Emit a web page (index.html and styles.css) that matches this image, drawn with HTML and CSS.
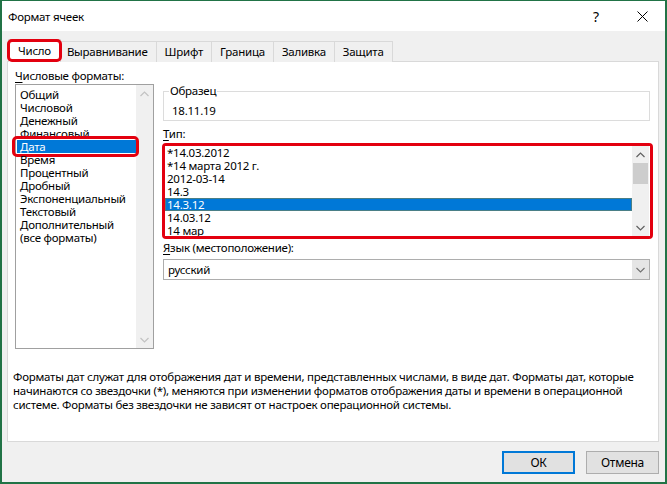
FILE: index.html
```html
<!DOCTYPE html>
<html lang="ru">
<head>
<meta charset="utf-8">
<title>Формат ячеек</title>
<link rel="stylesheet" href="styles.css">
</head>
<body>
<div class="window">
  <div class="titlebar">
    <span class="title">Формат ячеек</span>
    <span class="tbtn help">?</span>
    <span class="tbtn close">
      <svg width="11" height="11" viewBox="0 0 11 11"><path d="M0.5 0.5 L10.5 10.5 M10.5 0.5 L0.5 10.5" stroke="#000" stroke-width="1" fill="none"/></svg>
    </span>
  </div>
  <div class="content">
    <div class="tabs">
      <div class="tab active">Число</div>
      <div class="tab">Выравнивание</div>
      <div class="tab">Шрифт</div>
      <div class="tab">Граница</div>
      <div class="tab">Заливка</div>
      <div class="tab">Защита</div>
    </div>
    <div class="panel">
      <div class="columns">
        <div class="left">
          <div class="label"><u>Ч</u>исловые форматы:</div>
          <div class="listbox formats">
            <div class="items">
              <div class="item">Общий</div>
              <div class="item">Числовой</div>
              <div class="item">Денежный</div>
              <div class="item">Финансовый</div>
              <div class="item selected marked">Дата</div>
              <div class="item">Время</div>
              <div class="item">Процентный</div>
              <div class="item">Дробный</div>
              <div class="item">Экспоненциальный</div>
              <div class="item">Текстовый</div>
              <div class="item">Дополнительный</div>
              <div class="item">(все форматы)</div>
            </div>
            <div class="vscroll disabled">
              <span class="arrow"><svg width="9" height="6" viewBox="0 0 9 6"><path d="M0.5 5 L4.5 1 L8.5 5" stroke="#c2c2c2" stroke-width="1.2" fill="none"/></svg></span>
              <span class="arrow"><svg width="9" height="6" viewBox="0 0 9 6"><path d="M0.5 1 L4.5 5 L8.5 1" stroke="#c2c2c2" stroke-width="1.2" fill="none"/></svg></span>
            </div>
          </div>
        </div>
        <div class="right">
          <fieldset class="sample">
            <legend>Образец</legend>
            <div class="sample-value">18.11.19</div>
          </fieldset>
          <div class="label type-label"><u>Т</u>ип:</div>
          <div class="type-frame">
            <div class="listbox types">
              <div class="items">
                <div class="item">*14.03.2012</div>
                <div class="item">*14 марта 2012 г.</div>
                <div class="item">2012-03-14</div>
                <div class="item">14.3</div>
                <div class="item selected focused">14.3.12</div>
                <div class="item">14.03.12</div>
                <div class="item">14 мар</div>
              </div>
              <div class="vscroll">
                <span class="arrow"><svg width="9" height="6" viewBox="0 0 9 6"><path d="M0.5 5 L4.5 1 L8.5 5" stroke="#606060" stroke-width="1.2" fill="none"/></svg></span>
                <span class="thumb"></span>
                <span class="track"></span>
                <span class="arrow"><svg width="9" height="6" viewBox="0 0 9 6"><path d="M0.5 1 L4.5 5 L8.5 1" stroke="#606060" stroke-width="1.2" fill="none"/></svg></span>
              </div>
            </div>
          </div>
          <div class="label lang-label"><u>Я</u>зык (местоположение):</div>
          <div class="select">
            <span class="select-text">русский</span>
            <span class="select-btn"><svg width="9" height="6" viewBox="0 0 9 6"><path d="M0.5 1 L4.5 5 L8.5 1" stroke="#707070" stroke-width="1.1" fill="none"/></svg></span>
          </div>
        </div>
      </div>
      <p class="desc">Форматы дат служат для отображения дат и времени, представленных числами, в виде дат. Форматы дат, которые<br>начинаются со звездочки (*), меняются при изменении форматов отображения даты и времени в операционной<br>системе. Форматы без звездочки не зависят от настроек операционной системы.</p>
    </div>
    <div class="buttons">
      <button class="btn default">ОК</button>
      <button class="btn">Отмена</button>
    </div>
  </div>
</div>
</body>
</html>
```
FILE: styles.css
```css
* { box-sizing: border-box; }
html, body { margin: 0; padding: 0; background: #fff; }
body {
  font-family: "Noto Sans", "Open Sans", sans-serif;
  font-size: 11.5px;
  letter-spacing: -0.25px;
  color: #000;
}
.window {
  width: 667px;
  height: 484px;
  border: 2px solid #217346;
  border-top-width: 1px;
  background: #f0f0f0;
  display: flex;
  flex-direction: column;
}
.titlebar {
  height: 30px;
  background: #fff;
  display: flex;
  align-items: center;
  padding-left: 6px;
  flex-shrink: 0;
}
.title { flex: 1; }
.tbtn {
  width: 46px;
  height: 30px;
  display: flex;
  align-items: center;
  justify-content: center;
}
.help { font-size: 14px; letter-spacing: 0; }
.content {
  flex: 1;
  display: flex;
  flex-direction: column;
  padding: 10px 6px 0 5px;
}
.tabs {
  display: flex;
  height: 20px;
  padding-left: 3px;
  position: relative;
  z-index: 1;
}
.tab {
  height: 21px;
  line-height: 19px;
  padding: 0 8px;
  border: 1px solid #d9d9d9;
  border-bottom: none;
  margin-left: -1px;
  background: #f0f0f0;
  white-space: nowrap;
}
.tab.active {
  background: #fff;
  height: 23px;
  margin-top: -2px;
  margin-left: -2px;
  margin-right: -2px;
  padding: 0 9px;
  line-height: 21px;
  position: relative;
  z-index: 2;
}
.tab.active::after {
  content: "";
  position: absolute;
  left: -2px;
  top: -1px;
  right: -2px;
  bottom: 0;
  border: 3px solid #e3000f;
  border-radius: 5px;
}
.panel {
  height: 381px;
  border: 1px solid #d9d9d9;
  background: #fff;
  padding: 7px 8px 0 7px;
  display: flex;
  flex-direction: column;
}
.columns {
  display: flex;
  gap: 9px;
}
.left { width: 139px; flex-shrink: 0; }
.right { flex: 1; display: flex; flex-direction: column; }
.label { height: 15px; line-height: 14px; white-space: nowrap; }
.label u { text-decoration-thickness: 1px; text-underline-offset: 2px; }
.listbox { display: flex; background: #fff; }
.items { flex: 1; }
.item {
  height: 13px;
  line-height: 13px;
  padding-left: 3px;
  white-space: nowrap;
  position: relative;
}
.item.selected { background: #0078d7; color: #fff; }
.item.focused { box-shadow: inset 0 0 0 1px #4a7f86; }
.item.marked::after {
  content: "";
  position: absolute;
  left: -5px;
  top: -4px;
  right: -3px;
  bottom: -4px;
  border: 3px solid #e3000f;
  border-radius: 5px;
}
.formats {
  height: 265px;
  border: 1px solid #a0a0a0;
  padding: 3px 0 0 1px;
}
.formats .vscroll { margin-top: -3px; height: 263px; }
.vscroll {
  width: 17px;
  background: #f0f0f0;
  display: flex;
  flex-direction: column;
  justify-content: space-between;
  flex-shrink: 0;
}
.arrow {
  height: 17px;
  display: flex;
  align-items: center;
  justify-content: center;
}
.sample {
  margin: 15px 0 0 0;
  border: 1px solid #dcdcdc;
  padding: 6px 0 2px 8px;
  min-width: 0;
}
.sample legend {
  padding: 0 1px;
  margin-left: -3px;
  line-height: 14px;
}
.sample-value { line-height: 14px; height: 14px; }
.type-label { margin-top: 6px; }
.type-frame {
  margin: 1px -3px 0 -1px;
  height: 96px;
  border: 3px solid #e3000f;
  border-radius: 4px;
  background: #fff;
}
.types { height: 90px; overflow: hidden; }
.types .item { padding-left: 2px; }
.types .vscroll { justify-content: flex-start; margin-right: 1px; }
.types .thumb {
  height: 21px;
  margin: 0 1px;
  background: #cdcdcd;
}
.types .track { flex: 1; }
.lang-label { margin-top: 2px; }
.select {
  margin-top: 3px;
  height: 21px;
  border: 1px solid #adadad;
  display: flex;
  background: #fff;
}
.select-text { flex: 1; line-height: 19px; padding-left: 4px; }
.select-btn {
  width: 17px;
  background: #e5e5e5;
  display: flex;
  align-items: center;
  justify-content: center;
}
.desc {
  margin: 21px 0 0 -2px;
  line-height: 14px;
}
.buttons {
  display: flex;
  justify-content: flex-end;
  gap: 11px;
  margin-top: 9px;
}
.btn {
  width: 73px;
  height: 23px;
  font-family: inherit;
  font-size: 12px;
  letter-spacing: inherit;
  color: #000;
  background: #e1e1e1;
  border: 1px solid #adadad;
  padding: 0;
}
.btn.default { border: 2px solid #0078d7; }
```
